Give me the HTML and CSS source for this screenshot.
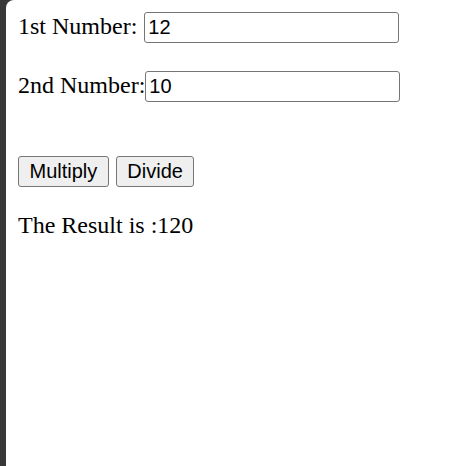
FILE: index.html
```html
<!DOCTYPE html>
<html>
<head>
<meta charset="utf-8">
<link rel="stylesheet" href="styles.css">
</head>
<body>
<div class="page">
  <div class="row row-first">
    <label class="label label-spaced" for="n1">1st Number:</label>
    <input class="field" id="n1" type="text" value="12">
  </div>
  <div class="row row-second">
    <label class="label" for="n2">2nd Number:</label>
    <input class="field" id="n2" type="text" value="10">
  </div>
  <div class="actions">
    <button class="btn" type="button">Multiply</button>
    <button class="btn" type="button">Divide</button>
  </div>
  <p class="result">The Result is :<span>120</span></p>
</div>
</body>
</html>
```
FILE: styles.css
```css
html, body {
  margin: 0;
  padding: 0;
  background: #383838;
  height: 100%;
}
.page {
  margin-left: 6px;
  background: #ffffff;
  border-top-left-radius: 8px;
  min-height: 466px;
  box-sizing: border-box;
  padding: 12px;
  font-family: "Liberation Serif", "Times New Roman", serif;
  font-size: 24px;
  color: #000;
}
.row {
  display: flex;
  align-items: baseline;
  height: 31px;
}
.row-second {
  margin-top: 28px;
}
.label {
  line-height: 27px;
}
.label-spaced {
  margin-right: 7px;
}
.field {
  box-sizing: border-box;
  width: 255px;
  height: 31px;
  margin: 0;
  padding: 1px 3px;
  border: 1px solid #767676;
  border-radius: 3px;
  font-family: "Liberation Sans", Arial, sans-serif;
  font-size: 20px;
  color: #000;
  background: #fff;
  outline: none;
}
.actions {
  display: flex;
  gap: 7px;
  margin-top: 54px;
}
.btn {
  box-sizing: border-box;
  height: 31px;
  margin: 0;
  padding: 0 10.5px;
  border: 1px solid #767676;
  border-radius: 3px;
  background: #efefef;
  font-family: "Liberation Sans", Arial, sans-serif;
  font-size: 20px;
  color: #000;
}
.result {
  margin: 25px 0 0;
  line-height: 27px;
}
```
